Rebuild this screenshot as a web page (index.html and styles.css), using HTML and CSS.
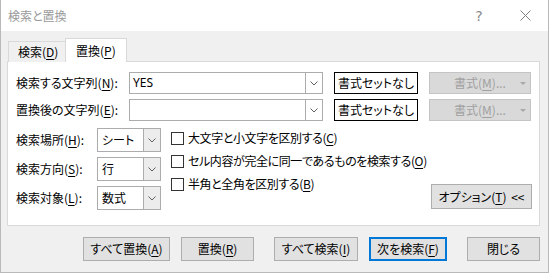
FILE: index.html
```html
<!DOCTYPE html>
<html lang="ja">

<head>
    <meta charset="UTF-8">
    <title>検索と置換</title>
    <link rel="stylesheet" href="styles.css">
</head>

<body>
    <div class="window">
        <div class="titlebar">
            <span class="title">検索と置換</span>
            <span class="tbtn help">?</span>
            <span class="tbtn">
                <svg width="11" height="11" viewBox="0 0 11 11">
                    <path d="M0.5 0.5 L10.5 10.5 M10.5 0.5 L0.5 10.5" stroke="#808080" stroke-width="1" fill="none" />
                </svg>
            </span>
        </div>

        <div class="client">
            <div class="tabs">
                <div class="tab">検索(<u>D</u>)</div>
                <div class="tab active">置換(<u>P</u>)</div>
            </div>

            <div class="panel">
                <div class="row">
                    <span class="lbl">検索する文字列(<u>N</u>):</span>
                    <div class="combo wide">
                        <span class="val latin">YES</span>
                        <span class="arrow"><svg width="8" height="5" viewBox="0 0 8 5"><path d="M0.5 0.5 L4 4 L7.5 0.5" stroke="#606060" fill="none" /></svg></span>
                    </div>
                    <button class="btn plain">書式セットなし</button>
                    <button class="btn disabled">書式(<u>M</u>)...<span class="tri"></span></button>
                </div>
                <div class="row">
                    <span class="lbl">置換後の文字列(<u>E</u>):</span>
                    <div class="combo wide">
                        <span class="val"></span>
                        <span class="arrow"><svg width="8" height="5" viewBox="0 0 8 5"><path d="M0.5 0.5 L4 4 L7.5 0.5" stroke="#606060" fill="none" /></svg></span>
                    </div>
                    <button class="btn plain">書式セットなし</button>
                    <button class="btn disabled">書式(<u>M</u>)...<span class="tri"></span></button>
                </div>

                <div class="lower">
                    <div class="opts">
                        <div class="opt">
                            <span class="lbl short">検索場所(<u>H</u>):</span>
                            <div class="combo small">
                                <span class="val">シート</span>
                                <span class="arrow"><svg width="8" height="5" viewBox="0 0 8 5"><path d="M0.5 0.5 L4 4 L7.5 0.5" stroke="#606060" fill="none" /></svg></span>
                            </div>
                        </div>
                        <div class="opt">
                            <span class="lbl short">検索方向(<u>S</u>):</span>
                            <div class="combo small">
                                <span class="val">行</span>
                                <span class="arrow"><svg width="8" height="5" viewBox="0 0 8 5"><path d="M0.5 0.5 L4 4 L7.5 0.5" stroke="#606060" fill="none" /></svg></span>
                            </div>
                        </div>
                        <div class="opt">
                            <span class="lbl short">検索対象(<u>L</u>):</span>
                            <div class="combo small">
                                <span class="val">数式</span>
                                <span class="arrow"><svg width="8" height="5" viewBox="0 0 8 5"><path d="M0.5 0.5 L4 4 L7.5 0.5" stroke="#606060" fill="none" /></svg></span>
                            </div>
                        </div>
                    </div>

                    <div class="checks">
                        <div class="check"><span class="box"></span><span>大文字と小文字を区別する(<u>C</u>)</span></div>
                        <div class="check"><span class="box"></span><span>セル内容が完全に同一であるものを検索する(<u>O</u>)</span></div>
                        <div class="check"><span class="box"></span><span>半角と全角を区別する(<u>B</u>)</span></div>
                    </div>

                    <button class="btn options">オプション(<u>T</u>) &lt;&lt;</button>
                </div>
            </div>

            <div class="actions">
                <button class="btn w-87">すべて置換(<u>A</u>)</button>
                <button class="btn w-73 gap-s">置換(<u>R</u>)</button>
                <button class="btn w-84 gap-l">すべて検索(<u>I</u>)</button>
                <button class="btn w-78 gap-s default">次を検索(<u>F</u>)</button>
                <button class="btn w-73 gap-l">閉じる</button>
            </div>
        </div>
    </div>
</body>

</html>
```

FILE: styles.css
```css
* {
    box-sizing: border-box;
    margin: 0;
    padding: 0;
}

html,
body {
    width: 549px;
    height: 273px;
    overflow: hidden;
}

body {
    background: #f0f0f0;
    font-family: "Noto Sans CJK JP", "Noto Sans", sans-serif;
    font-size: 12px;
    line-height: 16px;
    font-feature-settings: "palt";
    color: #000;
}

u {
    text-decoration: underline;
    text-underline-offset: 2px;
}

.window {
    height: 273px;
    border-left: 1px solid #b9b9b9;
    border-right: 1px solid #b9b9b9;
    border-bottom: 1px solid #b9b9b9;
}

/* title bar */

.titlebar {
    height: 31px;
    background: #fff;
    display: flex;
    align-items: center;
}

.title {
    padding-left: 7px;
    color: #9a9a9a;
    flex: 1;
}

.tbtn {
    width: 46px;
    height: 31px;
    display: grid;
    place-items: center;
    color: #8a8a8a;
    font-family: "DejaVu Sans", sans-serif;
    font-size: 14px;
}

/* tabs */

.client {
    padding: 8px 8px 0 6px;
}

.tabs {
    display: flex;
    align-items: flex-end;
    padding-left: 1px;
    height: 23px;
    position: relative;
    z-index: 1;
    margin-bottom: -1px;
}

.tab {
    height: 21px;
    width: 58px;
    padding-left: 9px;
    border: 1px solid #d9d9d9;
    border-bottom: 0;
    background: #f0f0f0;
    line-height: 20px;
    white-space: nowrap;
}

.tab.active {
    height: 24px;
    width: 62px;
    padding-left: 10px;
    margin-left: -1px;
    background: #fff;
    line-height: 24px;
}

.panel {
    height: 165px;
    background: #fff;
    border: 1px solid #d9d9d9;
    padding: 10px 7px 0 8px;
}

/* rows */

.row {
    display: flex;
    align-items: center;
    height: 22px;
    margin-bottom: 5px;
}

.lbl {
    width: 113px;
    flex: none;
    white-space: nowrap;
}

.lbl.short {
    width: 81px;
}

.combo {
    display: flex;
    height: 22px;
    border: 1px solid #acacac;
    background: #fff;
    flex: none;
}

.combo.wide {
    width: 194px;
}

.combo.small {
    width: 64px;
    height: 24px;
}

.val {
    flex: 1;
    padding-left: 4px;
    line-height: 20px;
}

.combo.small .val {
    line-height: 22px;
}

.latin {
    font-family: "Noto Sans", "Noto Sans CJK JP", sans-serif;
    padding-left: 3px;
}

.arrow {
    width: 17px;
    display: grid;
    place-items: center;
    border-left: 1px solid #acacac;
}

.combo.small .arrow {
    background: #ececec;
}

/* buttons */

.btn {
    font: inherit;
    color: #000;
    height: 22px;
    background: #e1e1e1;
    border: 1px solid #adadad;
    text-align: center;
    line-height: 16px;
    white-space: nowrap;
    flex: none;
}

.btn.plain {
    width: 84px;
    margin-left: 11px;
    background: #fff;
    border: 1px solid #000;
}

.btn.disabled {
    position: relative;
    width: 102px;
    margin-left: 11px;
    background: #d9d9d9;
    border-color: #c4c4c4;
    color: #a0a0a0;
}

.tri {
    position: absolute;
    right: 4px;
    top: 9px;
    border-left: 3px solid transparent;
    border-right: 3px solid transparent;
    border-top: 3px solid #a8a8a8;
}

/* lower area */

.lower {
    display: flex;
    margin-top: 7px;
}

.opts {
    display: flex;
    flex-direction: column;
    gap: 5px;
}

.opt {
    display: flex;
    align-items: center;
}

.checks {
    margin-left: 10px;
    display: flex;
    flex-direction: column;
    gap: 3px;
    letter-spacing: -0.4px;
}

.check {
    display: flex;
    align-items: center;
    height: 20px;
    white-space: nowrap;
}

.box {
    width: 13px;
    height: 13px;
    border: 1px solid #333;
    background: #fff;
    margin-right: 4px;
    flex: none;
}

.btn.options {
    width: 101px;
    height: 25px;
    margin-left: auto;
    align-self: flex-end;
    margin-bottom: 1px;
    word-spacing: 2px;
}

/* bottom buttons */

.actions {
    display: flex;
    margin-top: 11px;
    padding-left: 76px;
}

.actions .btn {
    height: 24px;
}

.w-87 {
    width: 87px;
}

.w-73 {
    width: 73px;
}

.w-84 {
    width: 84px;
}

.w-78 {
    width: 78px;
}

.gap-s {
    margin-left: 11px;
}

.gap-l {
    margin-left: 20px;
}

.btn.default {
    border: 2px solid #0078d7;
}
```
